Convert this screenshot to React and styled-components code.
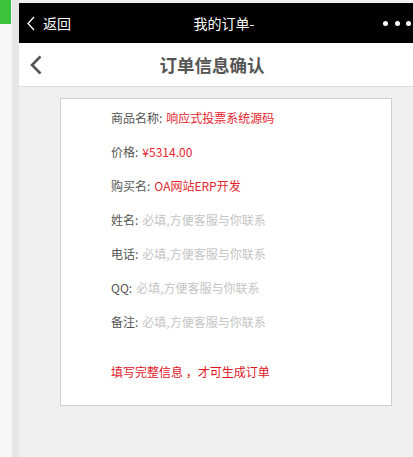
import styled, { createGlobalStyle } from 'styled-components';

const GlobalStyle = createGlobalStyle`
  html, body {
    margin: 0;
    padding: 0;
    overflow: hidden;
    background: #f7f7f7;
  }
  body {
    font-family: 'Noto Sans CJK SC', 'Noto Sans', sans-serif;
  }
`;

const fields = [
  { label: '商品名称', value: '响应式投票系统源码', tone: 'red' },
  { label: '价格', value: '¥5314.00', tone: 'red' },
  { label: '购买名', value: 'OA网站ERP开发', tone: 'red' },
  { label: '姓名', value: '必填,方便客服与你联系', tone: 'hint' },
  { label: '电话', value: '必填,方便客服与你联系', tone: 'hint' },
  { label: 'QQ', value: '必填,方便客服与你联系', tone: 'hint' },
  { label: '备注', value: '必填,方便客服与你联系', tone: 'hint' },
];

export default function App() {
  return (
    <>
      <GlobalStyle />
      <Page>
        <Rail>
          <GreenTab />
        </Rail>
        <RailLine />
        <Phone>
          <TopBar>
            <BackLink>
              <svg width="10" height="15" viewBox="0 0 10 15">
                <path d="M8 1 L2 7.5 L8 14" fill="none" stroke="#fff" strokeWidth="1.3" />
              </svg>
              <span>返回</span>
            </BackLink>
            <TopTitle>我的订单-</TopTitle>
            <Dots>
              <Dot />
              <Dot />
              <Dot />
            </Dots>
          </TopBar>
          <Nav>
            <NavBack>
              <svg width="14" height="20" viewBox="0 0 14 20">
                <path d="M11.5 1.5 L3 10 L11.5 18.5" fill="none" stroke="#555" strokeWidth="2.6" />
              </svg>
            </NavBack>
            <NavTitle>订单信息确认</NavTitle>
          </Nav>
          <Card>
            {fields.map((f) => (
              <Row key={f.label}>
                <Label>{f.label}:</Label>
                <Value tone={f.tone}>{f.value}</Value>
              </Row>
            ))}
            <Notice>填写完整信息 ，才可生成订单</Notice>
          </Card>
        </Phone>
      </Page>
    </>
  );
}

const Page = styled.div`
  display: flex;
  height: 457px;
`;

const Rail = styled.div`
  width: 12px;
  flex-shrink: 0;
  background: #f7f7f7;
`;

const GreenTab = styled.div`
  width: 11px;
  height: 24px;
  background: #3cc43c;
`;

const RailLine = styled.div`
  width: 7px;
  flex-shrink: 0;
  background: #e6e6e6;
`;

const Phone = styled.div`
  width: 414px;
  flex-shrink: 0;
  background: #f0f0f0;
  padding-top: 3px;
  display: flex;
  flex-direction: column;
`;

const TopBar = styled.div`
  height: 40px;
  background: #000;
  color: #fff;
  display: flex;
  align-items: center;
  position: relative;
  font-size: 14px;
`;

const BackLink = styled.div`
  display: flex;
  align-items: center;
  gap: 7px;
  padding-left: 7px;
  span {
    line-height: 1;
  }
`;

const TopTitle = styled.div`
  position: absolute;
  left: 0;
  right: 4px;
  text-align: center;
  pointer-events: none;
`;

const Dots = styled.div`
  margin-left: auto;
  display: flex;
  gap: 6.5px;
  padding-right: 22px;
`;

const Dot = styled.span`
  width: 5px;
  height: 5px;
  border-radius: 50%;
  background: #fff;
`;

const Nav = styled.div`
  height: 43px;
  background: #fff;
  border-bottom: 1px solid #dcdcdc;
  display: flex;
  align-items: center;
`;

const NavBack = styled.div`
  width: 44px;
  display: flex;
  padding-left: 10px;
  box-sizing: border-box;
`;

const NavTitle = styled.div`
  flex: 1;
  margin-right: 72px;
  text-align: center;
  font-size: 17.5px;
  font-weight: bold;
  color: #555;
`;

const Card = styled.div`
  margin: 11px 0 0 41px;
  width: 332px;
  box-sizing: border-box;
  background: #fff;
  border: 1px solid #cfcfcf;
  padding: 1px 0 17px 50px;
`;

const Row = styled.div`
  height: 34px;
  display: flex;
  align-items: center;
  font-size: 12px;
  gap: 4px;
`;

const Label = styled.span`
  color: #555;
`;

const Value = styled.span`
  color: ${(p) => (p.tone === 'red' ? '#e4242e' : '#c4c4c4')};
`;

const Notice = styled.div`
  margin-top: 16px;
  height: 34px;
  display: flex;
  align-items: center;
  font-size: 12px;
  color: #e0141e;
`;
